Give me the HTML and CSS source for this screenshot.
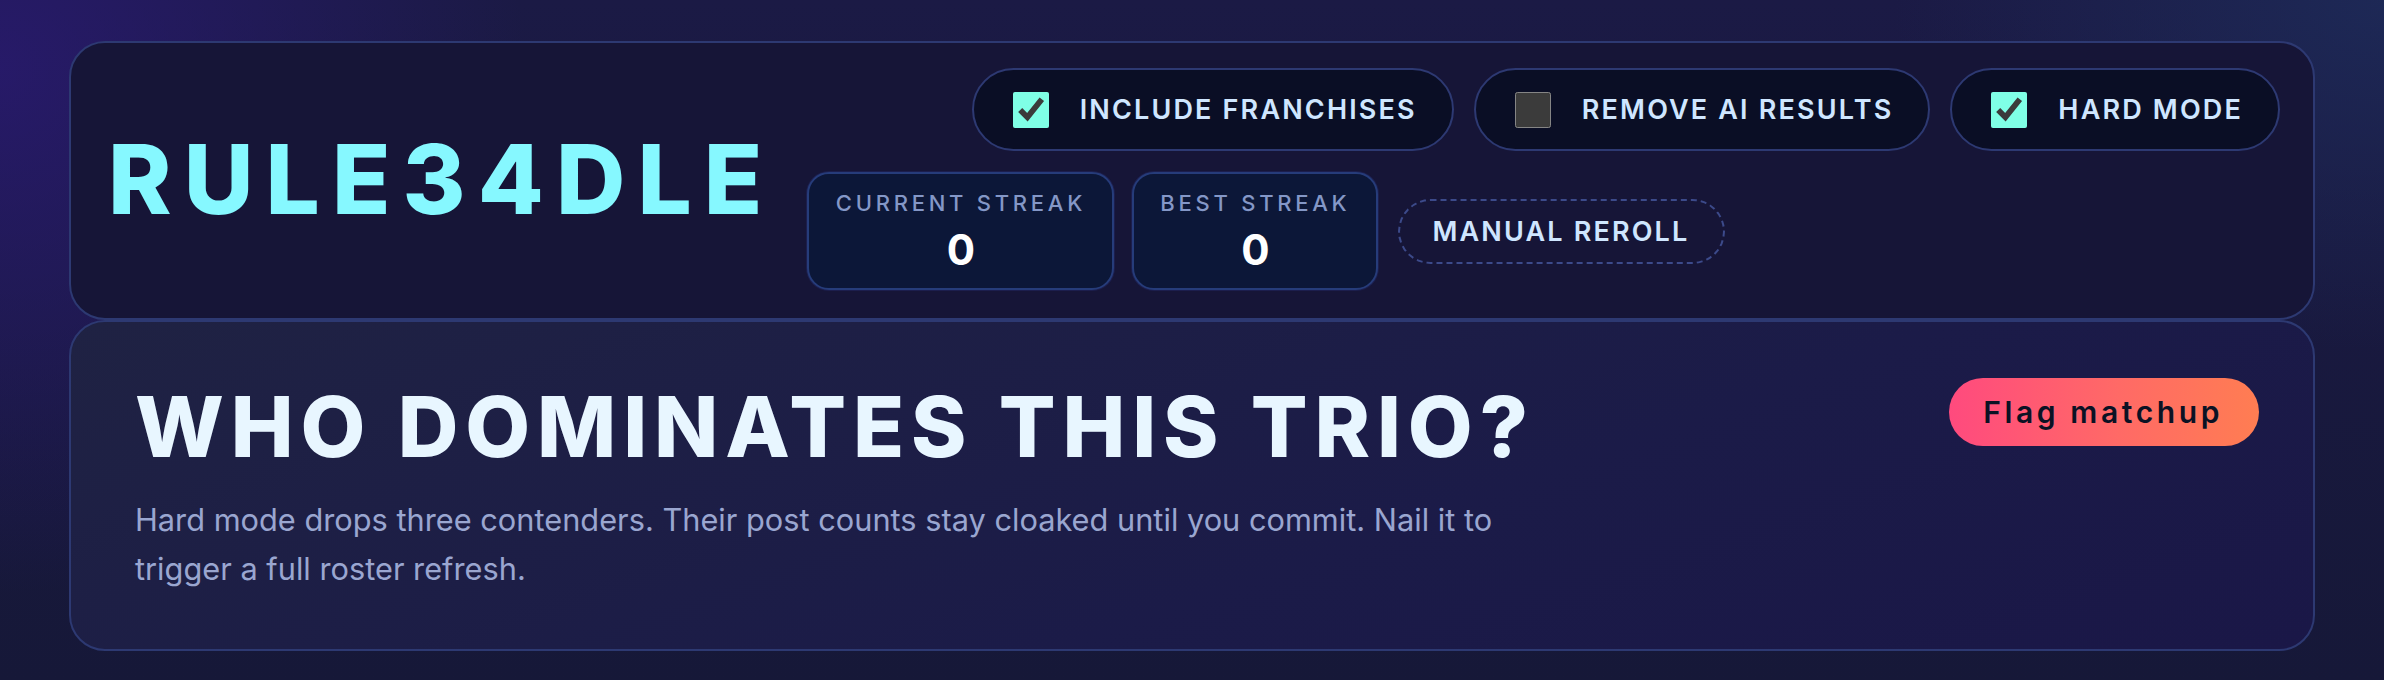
FILE: index.html
```html
<!DOCTYPE html>
<html lang="en">
<head>
<meta charset="utf-8">
<title>Rule34dle</title>
<link rel="stylesheet" href="styles.css">
</head>
<body>
<main class="page">
  <header class="card header-card">
    <h1 class="logo">RULE34DLE</h1>
    <div class="controls">
      <div class="toggles">
        <label class="toggle"><input type="checkbox" checked><span>INCLUDE FRANCHISES</span></label>
        <label class="toggle"><input type="checkbox"><span>REMOVE AI RESULTS</span></label>
        <label class="toggle"><input type="checkbox" checked><span>HARD MODE</span></label>
      </div>
      <div class="stats">
        <div class="stat stat-current">
          <div class="stat-label">CURRENT STREAK</div>
          <div class="stat-value">0</div>
        </div>
        <div class="stat stat-best">
          <div class="stat-label">BEST STREAK</div>
          <div class="stat-value">0</div>
        </div>
        <button class="reroll" type="button">MANUAL REROLL</button>
      </div>
    </div>
  </header>
  <section class="card intro-card">
    <div class="intro-text">
      <h2 class="intro-title">WHO DOMINATES THIS TRIO?</h2>
      <p class="intro-desc">Hard mode drops three contenders. Their post counts stay cloaked until you commit. Nail it to trigger a full roster refresh.</p>
    </div>
    <button class="flag" type="button">Flag matchup</button>
  </section>
</main>
</body>
</html>
```
FILE: styles.css
```css
* { box-sizing: border-box; }

html, body {
  margin: 0;
  height: 100%;
}

body {
  font-family: Inter, "Noto Sans", "Liberation Sans", sans-serif;
  color: #e8f6ff;
  background:
    radial-gradient(ellipse 700px 700px at 0% 10%, rgba(44, 26, 120, 0.7), rgba(44, 26, 120, 0) 75%),
    radial-gradient(ellipse 700px 500px at 100% 0%, rgba(30, 44, 90, 0.8), rgba(30, 44, 90, 0) 70%),
    linear-gradient(180deg, #1b1a45 0%, #161838 100%);
  color-scheme: dark;
  overflow: hidden;
}

.page {
  width: 2246px;
  margin: 0 auto;
  padding-top: 41px;
  display: flex;
  flex-direction: column;
  gap: 0;
}

.card {
  border: 2px solid #2d3972;
  border-radius: 36px;
}

/* Header */
.header-card {
  background: #161537;
  display: flex;
  align-items: center;
  gap: 33px;
  padding: 25px 33px 28px 37px;
}

.logo {
  margin: 0;
  font-size: 96px;
  font-weight: 800;
  line-height: 1;
  letter-spacing: 0.126em;
  color: #86f8ff;
  white-space: nowrap;
}

.controls {
  flex: 1;
  display: flex;
  flex-direction: column;
  gap: 21px;
}

.toggles {
  align-self: flex-end;
  display: flex;
  gap: 20px;
}

.toggle {
  display: flex;
  align-items: center;
  gap: 31px;
  height: 83px;
  padding: 0 35px 0 39px;
  background: #0a0e25;
  border: 2px solid #2d3972;
  border-radius: 999px;
  font-size: 27px;
  font-weight: 600;
  letter-spacing: 0.08em;
  color: #cfe6ff;
  white-space: nowrap;
}

.toggle input {
  margin: 0;
  width: 36px;
  height: 36px;
  accent-color: #7fffe6;
}

.stats {
  align-self: flex-start;
  display: flex;
  align-items: center;
  gap: 18px;
}

.stat {
  display: flex;
  flex-direction: column;
  align-items: center;
  height: 118px;
  padding: 14px 24px 0;
  background: #0c1738;
  border: 2px solid #263c7a;
  border-radius: 22px;
  box-shadow: 0 0 0 1px rgba(40, 50, 120, 0.35);
}

.stat-current { width: 307px; }
.stat-best { width: 246px; }

.stat-label {
  font-size: 22px;
  line-height: 30px;
  font-weight: 500;
  letter-spacing: 0.17em;
  color: #8497c7;
  white-space: nowrap;
}

.stat-value {
  margin-top: 5px;
  font-size: 42px;
  line-height: 54px;
  font-weight: 700;
  color: #ffffff;
}

.reroll {
  margin-left: 2px;
  height: 65px;
  padding: 0 34px 0 32px;
  background: transparent;
  border: 2px dashed #3c4a8a;
  border-radius: 999px;
  font-family: inherit;
  font-size: 27px;
  font-weight: 600;
  letter-spacing: 0.08em;
  color: #cfe6ff;
  white-space: nowrap;
}

/* Intro card */
.intro-card {
  background: linear-gradient(160deg, #1f2243 0%, #1b1b48 60%, #1a1747 100%);
  display: flex;
  justify-content: space-between;
  align-items: flex-start;
  padding: 56px 54px 56px 64px;
}

.intro-title {
  margin: 0;
  padding-top: 2px;
  font-size: 84px;
  line-height: 1.12;
  font-weight: 800;
  letter-spacing: 0.082em;
  color: #e8f6ff;
  white-space: nowrap;
}

.intro-desc {
  margin: 22px 0 0;
  max-width: 1420px;
  font-size: 30.75px;
  line-height: 48.5px;
  color: #9aa6d0;
}

.flag {
  margin-top: 0;
  height: 68px;
  padding: 0 36px 0 34px;
  border: none;
  border-radius: 999px;
  background: linear-gradient(90deg, #ff4a7e 0%, #ff6a66 55%, #ff7d52 100%);
  font-family: inherit;
  font-size: 30px;
  font-weight: 600;
  letter-spacing: 0.12em;
  color: #0b1224;
  white-space: nowrap;
}
```
